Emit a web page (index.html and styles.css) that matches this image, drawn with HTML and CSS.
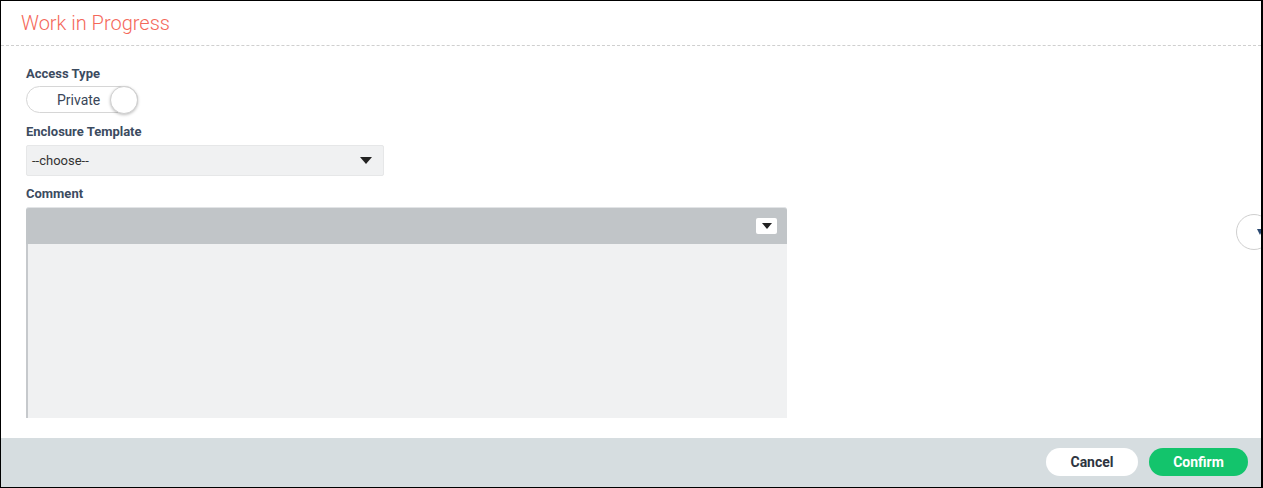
FILE: index.html
```html
<!DOCTYPE html>
<html>
<head>
<meta charset="utf-8">
<link rel="stylesheet" href="styles.css">
</head>
<body>
<div class="frame">
  <header class="header">
    <h1 class="title">Work in Progress</h1>
  </header>
  <main class="main">
    <div class="label">Access Type</div>
    <div class="toggle">
      <span class="toggle-text">Private</span>
      <span class="knob"></span>
    </div>
    <div class="label label-gap">Enclosure Template</div>
    <div class="select">
      <span class="select-text">--choose--</span>
      <svg class="caret" width="12" height="7" viewBox="0 0 12 7"><path d="M0 0 H12 L6 7 Z" fill="#222"/></svg>
    </div>
    <div class="label label-gap2">Comment</div>
    <div class="editor">
      <div class="toolbar">
        <button class="tb-btn"><svg width="10" height="6" viewBox="0 0 10 6"><path d="M0 0 H10 L5 6 Z" fill="#222"/></svg></button>
      </div>
      <div class="editor-body"></div>
    </div>
    <div class="side-btn"><svg width="12" height="12" viewBox="0 0 12 12"><path d="M2 3 L8 3 L5 9 Z" fill="#2b4a72"/></svg></div>
  </main>
  <footer class="footer">
    <button class="btn btn-cancel">Cancel</button>
    <button class="btn btn-confirm">Confirm</button>
  </footer>
</div>
</body>
</html>
```
FILE: styles.css
```css
* { box-sizing: border-box; }
html, body { margin: 0; padding: 0; }
body {
  width: 1263px;
  height: 488px;
  overflow: hidden;
  font-family: Roboto, "Liberation Sans", sans-serif;
  background: #fff;
}
.frame {
  width: 1263px;
  height: 488px;
  border-top: 1px solid #000;
  border-left: 1px solid #000;
  border-right: 2px solid #000;
  border-bottom: 1px solid #000;
  display: flex;
  flex-direction: column;
  overflow: hidden;
  position: relative;
}
.header {
  height: 45px;
  border-bottom: 1px dashed #cfcfcf;
  padding-left: 20px;
  display: flex;
  align-items: center;
  flex-shrink: 0;
}
.title {
  margin: 0;
  font-size: 20px;
  font-weight: 300;
  color: #f4685a;
  padding-bottom: 1px;
}
.main {
  flex: 1;
  padding: 20px 0 0 25px;
  position: relative;
}
.label {
  font-size: 13px;
  font-weight: 700;
  line-height: 16px;
  color: #3c4b5f;
}
.toggle {
  margin-top: 4px;
  width: 112px;
  height: 27px;
  border: 1px solid #d6d6d6;
  border-radius: 14px;
  display: flex;
  align-items: center;
  position: relative;
  background: #fff;
}
.toggle-text {
  font-size: 14px;
  color: #3a4658;
  padding-left: 30px;
}
.knob {
  position: absolute;
  right: -1px;
  top: -1px;
  width: 28px;
  height: 28px;
  border-radius: 50%;
  background: #fff;
  border: 1px solid #d0d0d0;
  box-shadow: 0 1px 3px rgba(0,0,0,0.25);
}
.label-gap { margin-top: 11px; }
.select {
  margin-top: 5px;
  width: 358px;
  height: 31px;
  background: #f0f1f2;
  border: 1px solid #e6e7e8;
  border-radius: 2px;
  display: flex;
  align-items: center;
  justify-content: space-between;
  padding: 0 11px 0 5px;
}
.select-text {
  font-size: 13px;
  color: #333;
}
.label-gap2 { margin-top: 10px; }
.editor {
  margin-top: 5px;
  width: 761px;
  height: 211px;
  display: flex;
  flex-direction: column;
  background: #f0f1f2;
  border-radius: 3px;
}
.toolbar {
  height: 37px;
  background: #c1c5c8;
  border-radius: 3px 3px 0 0;
  border-top: 1px solid #e2e4e6;
  display: flex;
  justify-content: flex-end;
  align-items: flex-start;
  padding: 10px 10px 0 0;
}
.tb-btn {
  width: 21px;
  height: 16px;
  background: #fff;
  border: none;
  border-radius: 2px;
  padding: 0;
  display: flex;
  align-items: center;
  justify-content: center;
}
.editor-body {
  flex: 1;
  border-left: 2px solid #c6c9cc;
  background: #f0f1f2;
}
.side-btn {
  position: absolute;
  left: 1235px;
  top: 168px;
  width: 36px;
  height: 36px;
  border-radius: 50%;
  border: 1px solid #cfcfcf;
  background: #fff;
  display: flex;
  align-items: center;
  padding-left: 18px;
}
.footer {
  height: 49px;
  flex-shrink: 0;
  background: #d6dde0;
  display: flex;
  justify-content: flex-end;
  align-items: center;
  gap: 11px;
  padding-right: 13px;
  padding-bottom: 1px;
}
.btn {
  height: 28px;
  border: none;
  border-radius: 14px;
  font-family: Roboto, "Liberation Sans", sans-serif;
  font-size: 14px;
  font-weight: 700;
}
.btn-cancel {
  width: 92px;
  background: #fff;
  color: #2e3440;
}
.btn-confirm {
  width: 99px;
  background: #13c46c;
  color: #fff;
}
```
